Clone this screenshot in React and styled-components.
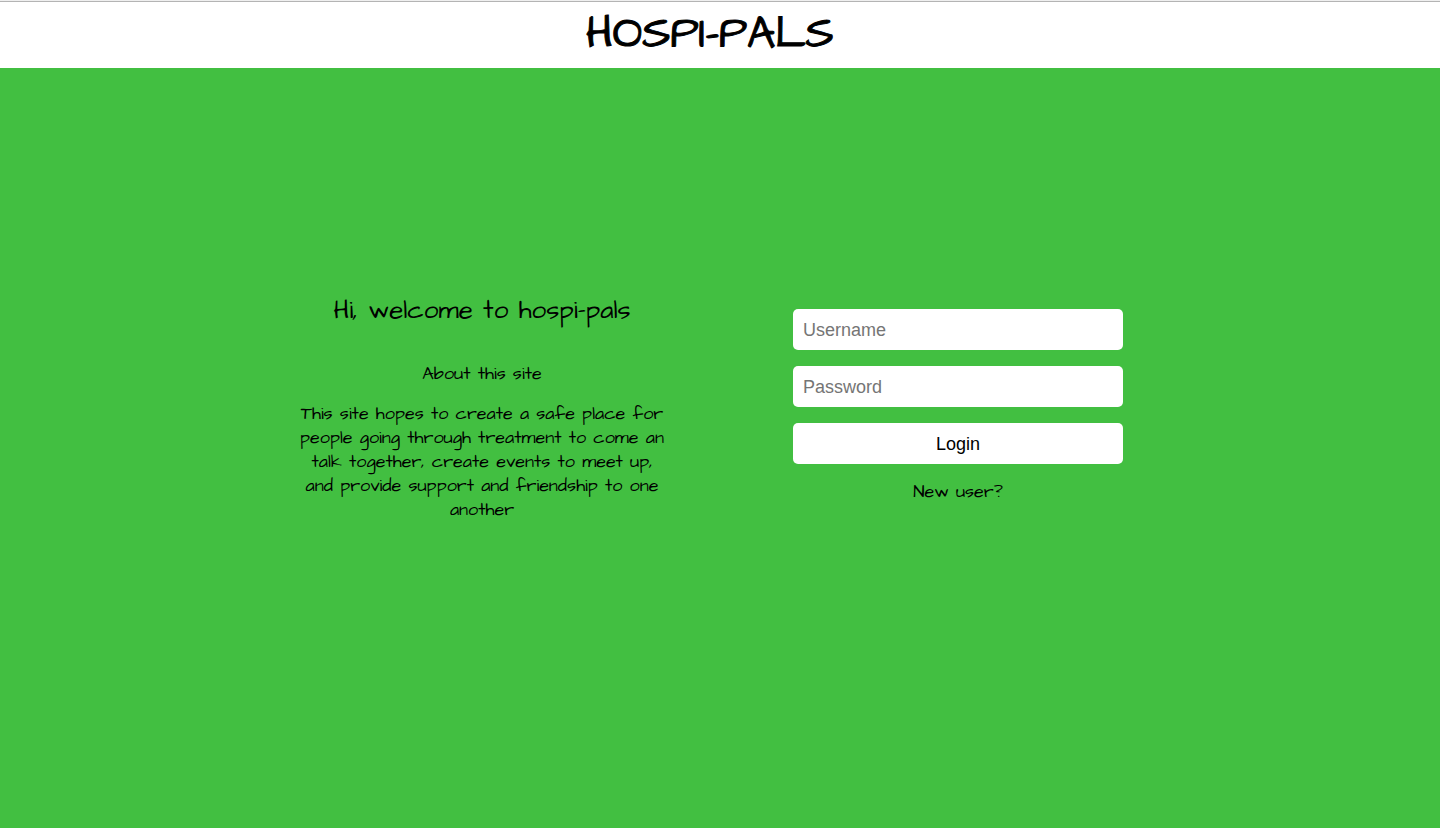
import React from "react";
import styled, { createGlobalStyle } from "styled-components";

const GlobalStyle = createGlobalStyle`
  *, *::before, *::after { box-sizing: border-box; }
  body {
    margin: 0;
    color: #000;
    font-family: "Architects Daughter", "Open Sans", sans-serif;
    font-size: 18px;
    line-height: 24px;
  }
`;

const Page = styled.div`
  min-height: 100vh;
  display: flex;
  flex-direction: column;
  background: #42bf41;
`;

const Header = styled.header`
  height: 68px;
  padding-right: 20px;
  display: flex;
  justify-content: center;
  background: #fff;
  border-top: 1px solid #efefef;
  box-shadow: inset 0 1px #b4b4b4;
`;

const SiteTitle = styled.h1`
  margin: 0;
  font-size: 44px;
  font-weight: 400;
  line-height: 68px;
  -webkit-text-stroke: 1px currentColor;
`;

const Main = styled.main`
  flex: 1;
  width: 100%;
  max-width: 952px;
  margin: 0 auto;
  padding-bottom: 84px;
  display: grid;
  grid-template-columns: 1fr 1fr;
  justify-items: center;
  align-items: center;
`;

const About = styled.section`
  width: 368px;
  text-align: center;
`;

const Welcome = styled.h2`
  margin: 0 0 32px;
  font-size: 26px;
  font-weight: 600;
  line-height: 40px;
`;

const Paragraph = styled.p`
  margin: 0 0 16px;
  &:last-child { margin-bottom: 0; }
`;

const LoginForm = styled.form`
  width: 330px;
  display: flex;
  flex-direction: column;
  gap: 16px;
`;

const Field = styled.input`
  width: 100%;
  height: 41px;
  padding: 2px 10px 0;
  border: 0;
  border-radius: 5px;
  background: #fff;
  font: 18px "Liberation Sans", Arial, sans-serif;
  &::placeholder { color: #757575; opacity: 1; }
`;

const LoginButton = styled.button`
  height: 41px;
  padding: 2px 10px 0;
  border: 0;
  border-radius: 5px;
  background: #fff;
  color: #000;
  font: 18px "Liberation Sans", Arial, sans-serif;
  cursor: pointer;
`;

const NewUserLink = styled.a`
  align-self: center;
  color: inherit;
  text-decoration: none;
`;

export default function App() {
  return (
    <Page>
      <GlobalStyle />
      <Header>
        <SiteTitle>HOSPI-PALS</SiteTitle>
      </Header>
      <Main>
        <About>
          <Welcome>Hi, welcome to hospi-pals</Welcome>
          <Paragraph>About this site</Paragraph>
          <Paragraph>
            This site hopes to create a safe place for people going through
            treatment to come an talk together, create events to meet up, and
            provide support and friendship to one another
          </Paragraph>
        </About>
        <LoginForm onSubmit={(event) => event.preventDefault()}>
          <Field type="text" name="username" placeholder="Username" aria-label="Username" />
          <Field type="password" name="password" placeholder="Password" aria-label="Password" />
          <LoginButton type="submit">Login</LoginButton>
          <NewUserLink href="#register">New user?</NewUserLink>
        </LoginForm>
      </Main>
    </Page>
  );
}
